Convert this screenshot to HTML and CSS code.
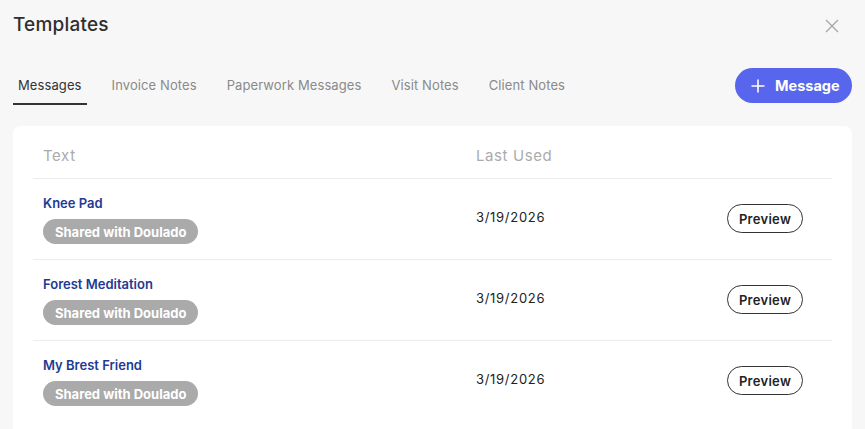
FILE: index.html
```html
<!DOCTYPE html>
<html>
<head>
<meta charset="utf-8">
<link rel="stylesheet" href="styles.css">
</head>
<body>
<div class="modal">
  <div class="top">
    <h1 class="title">Templates</h1>
    <button class="close" aria-label="Close">
      <svg width="14" height="14" viewBox="0 0 14 14"><path d="M1 1 L13 13 M13 1 L1 13" stroke="#a8a8a8" stroke-width="1.4" fill="none"/></svg>
    </button>
  </div>
  <div class="bar">
    <nav class="tabs">
      <span class="tab active">Messages</span>
      <span class="tab">Invoice Notes</span>
      <span class="tab">Paperwork Messages</span>
      <span class="tab">Visit Notes</span>
      <span class="tab">Client Notes</span>
    </nav>
    <button class="add">
      <svg width="14" height="14" viewBox="0 0 14 14"><path d="M7 0.5 V13.5 M0.5 7 H13.5" stroke="#fff" stroke-width="1.6" fill="none"/></svg>
      <span>Message</span>
    </button>
  </div>
  <div class="card">
    <div class="row head">
      <div class="cell">Text</div>
      <div class="cell">Last Used</div>
      <div class="cell"></div>
    </div>
    <div class="row">
      <div class="cell name-cell">
        <div class="name">Knee Pad</div>
        <span class="badge">Shared with Doulado</span>
      </div>
      <div class="cell date">3/19/2026</div>
      <div class="cell action"><button class="preview">Preview</button></div>
    </div>
    <div class="row">
      <div class="cell name-cell">
        <div class="name">Forest Meditation</div>
        <span class="badge">Shared with Doulado</span>
      </div>
      <div class="cell date">3/19/2026</div>
      <div class="cell action"><button class="preview">Preview</button></div>
    </div>
    <div class="row">
      <div class="cell name-cell">
        <div class="name">My Brest Friend</div>
        <span class="badge">Shared with Doulado</span>
      </div>
      <div class="cell date">3/19/2026</div>
      <div class="cell action"><button class="preview">Preview</button></div>
    </div>
  </div>
</div>
</body>
</html>
```
FILE: styles.css
```css
html, body {
  margin: 0;
  padding: 0;
  background: #f7f7f7;
  font-family: Inter, "Noto Sans", Arial, sans-serif;
  overflow: hidden;
}
.modal {
  padding: 0 13px;
  height: 429px;
  box-sizing: border-box;
  overflow: hidden;
}
.top {
  display: flex;
  justify-content: space-between;
  align-items: center;
  height: 50px;
}
.title {
  margin: 0;
  font-size: 19px;
  font-weight: 500;
  color: #2f2f2f;
  letter-spacing: 0.2px;
  padding-bottom: 2px;
}
.close {
  border: 0;
  background: none;
  padding: 0;
  width: 14px;
  height: 14px;
  margin-right: 13px;
  margin-top: 1px;
  display: flex;
}
.bar {
  display: flex;
  justify-content: space-between;
  align-items: flex-start;
  height: 74px;
  margin-top: 2px;
}
.tabs {
  display: flex;
  gap: 20px;
}
.tab {
  padding: 24px 5px 9px;
  font-size: 13px;
  line-height: 18px;
  color: #8a8a8a;
  border-bottom: 2px solid transparent;
  letter-spacing: 0.1px;
}
.tab.active {
  color: #333;
  border-bottom-color: #333;
}
.add {
  display: flex;
  align-items: center;
  gap: 10px;
  height: 35px;
  width: 117px;
  padding: 0 0 0 16px;
  margin-top: 16px;
  border: 0;
  border-radius: 18px;
  background: #5866ee;
  color: #fff;
  font-family: Inter, Arial, sans-serif;
  font-size: 14.5px;
  font-weight: 700;
  box-sizing: border-box;
}
.card {
  background: #fff;
  border-radius: 8px 8px 0 0;
  padding: 0 20px;
  height: 303px;
  box-sizing: border-box;
  overflow: hidden;
}
.row {
  display: grid;
  grid-template-columns: 433px 1fr auto;
  border-bottom: 1px solid #ececec;
}
.row:last-child {
  border-bottom: 0;
}
.cell {
  padding-left: 10px;
}
.head {
  padding-top: 20px;
  padding-bottom: 12px;
  font-size: 15px;
  line-height: 20px;
  color: #ababab;
  letter-spacing: 0.6px;
}
.name-cell {
  padding-top: 15px;
  padding-bottom: 15px;
}
.name {
  font-size: 13px;
  font-weight: 600;
  line-height: 18px;
  color: #1f3a93;
  margin-bottom: 7px;
}
.badge {
  display: inline-flex;
  align-items: center;
  height: 25px;
  padding: 0 12px;
  border-radius: 13px;
  background: #aaaaaa;
  color: #fff;
  font-size: 13px;
  font-weight: 700;
}
.date {
  display: flex;
  align-items: center;
  font-size: 13px;
  color: #222;
  letter-spacing: 0.7px;
  padding-bottom: 4px;
}
.action {
  display: flex;
  align-items: center;
  padding-right: 29px;
}
.preview {
  height: 29px;
  width: 76px;
  border: 1px solid #333;
  border-radius: 15px;
  background: #fff;
  font-family: Inter, Arial, sans-serif;
  font-size: 13px;
  font-weight: 600;
  color: #222;
  padding: 0;
  margin-top: -1px;
  letter-spacing: 0.3px;
}
```
